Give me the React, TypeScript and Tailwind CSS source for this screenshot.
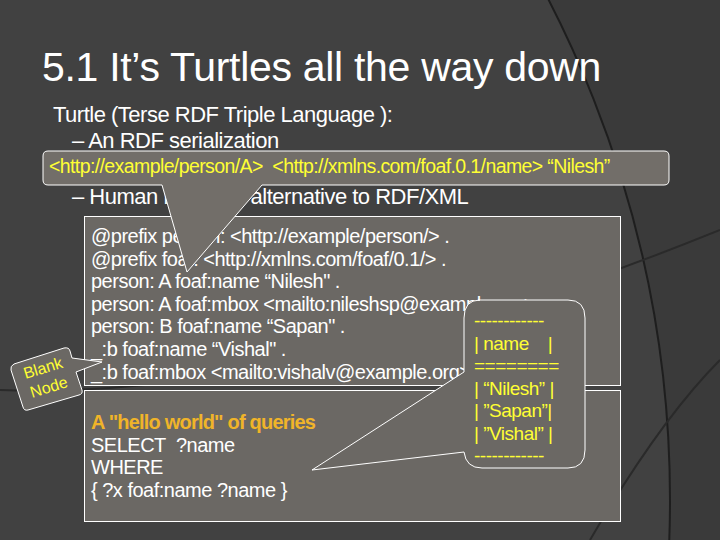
export default function App() {
  const code1 = [
    "@prefix person: <http://example/person/> .",
    "@prefix foaf: <http://xmlns.com/foaf/0.1/> .",
    "person: A foaf:name \u201cNilesh\" .",
    "person: A foaf:mbox <mailto:nileshsp@example.org> .",
    "person: B foaf:name \u201cSapan\" .",
    "_:b foaf:name \u201cVishal\" .",
    "_:b foaf:mbox <mailto:vishalv@example.org> .",
  ];
  return (
    <div className="relative w-[720px] h-[540px] overflow-hidden bg-[#3c3c3c] text-white" style={{ fontFamily: '"Liberation Sans", Arial, sans-serif' }}>
      <svg className="absolute inset-0" width="720" height="540">
        <path d="M0 0 H720 V540 H0 Z" fill="#3a3a3a" />
        <circle cx="-420" cy="500" r="1090" fill="#414141" stroke="#1e1e1e" strokeWidth="2" />
        <path d="M0 390 Q300 400 720 230" fill="none" stroke="#2a2a2a" strokeWidth="2" />
        <path d="M590 540 Q660 420 720 360" fill="none" stroke="#2a2a2a" strokeWidth="2" />
      </svg>
      <div className="relative pl-[42px] pt-[42px]">
        <div className="text-[41px] leading-[50px] tracking-[-0.3px]">5.1 It’s Turtles all the way down</div>
        <div className="mt-[10px] pl-[11px] text-[22px] leading-[26px] tracking-[-0.5px]">Turtle (Terse RDF Triple Language ):</div>
        <div className="pl-[30px] text-[22px] leading-[26px] tracking-[-0.5px]">– An RDF serialization</div>
        <div className="mt-[30px] pl-[30px] text-[22px] leading-[26px] tracking-[-0.5px]">– Human readable alternative to RDF/XML</div>
        <div className="ml-[42px] mt-[6px] w-[537px] flex flex-col gap-[4px]">
          <div className="h-[170px] bg-[#6b6864] border border-white pl-[6px] pt-[8px] text-[20px] leading-[22.6px] tracking-[-0.5px]">
            {code1.map((l) => <div key={l} className="whitespace-nowrap">{l}</div>)}
          </div>
          <div className="h-[132px] bg-[#6b6864] border border-white pl-[6px] pt-[20px] text-[20px] leading-[22.6px] tracking-[-0.5px]">
            <div className="text-[#f0b429] font-bold tracking-[-0.8px]">A "hello world" of queries</div>
            <div>SELECT&nbsp; ?name</div>
            <div>WHERE</div>
            <div>{"{ ?x  foaf:name  ?name }"}</div>
          </div>
        </div>
      </div>
      <svg className="absolute inset-0" width="720" height="540">
        <path d="M48 151 H664 Q669 151 669 156 V180 Q669 185 664 185 H262 L187 272 L162 185 H48 Q43 185 43 180 V156 Q43 151 48 151 Z" fill="#726e69" stroke="white" strokeWidth="1" />
        <path d="M478 300 H568 Q585 300 585 318 V450 Q585 468 568 468 H482 Q466 468 464 452 L312 470 L464 372 V318 Q464 300 480 300 Z" fill="#6b6864" stroke="white" strokeWidth="1" />
        <path d="M14 364 L64 348 Q69 347 70 351 L72 358 L102 362 L76 372 L82 390 Q83 394 79 395 L28 410 Q24 411 23 407 L11 370 Q10 366 14 364 Z" fill="#6b6864" stroke="white" strokeWidth="1" />
      </svg>
      <div className="absolute left-[49px] top-[155px] text-[19.5px] leading-[22px] text-[#ffff33] whitespace-nowrap tracking-[-0.6px]">
        &lt;http://example/person/A&gt;&nbsp; &lt;http://xmlns.com/foaf.0.1/name&gt; “Nilesh”
      </div>
      <div className="absolute left-[474px] top-[310px] text-[19px] leading-[22.5px] text-[#ffff33] whitespace-pre tracking-[-0.5px]">
        {"------------\n| name    |\n========\n| “Nilesh” |\n| ”Sapan”|\n| ”Vishal” |\n------------"}
      </div>
      <div className="absolute left-[16px] top-[358px] w-[60px] text-[16px] leading-[20px] text-[#ffff33] -rotate-[17deg] text-center">
        Blank<br />Node
      </div>
    </div>
  );
}
